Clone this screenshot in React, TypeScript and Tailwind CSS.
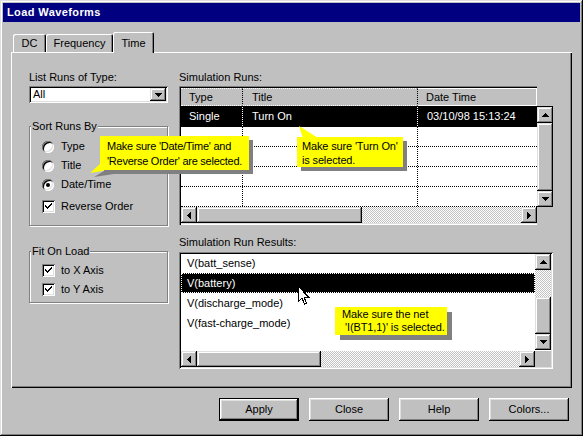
import React from "react";

const raised =
  "shadow-[inset_-1px_-1px_#000,inset_1px_1px_#fff,inset_-2px_-2px_#808080,inset_2px_2px_#dfdfdf]";
const raisedSb =
  "shadow-[inset_-1px_-1px_#000,inset_1px_1px_#dfdfdf,inset_-2px_-2px_#808080,inset_2px_2px_#fff]";
const sunken =
  "shadow-[inset_1px_1px_#808080,inset_-1px_-1px_#fff,inset_2px_2px_#000,inset_-2px_-2px_#dfdfdf]";
const checker =
  "bg-[image:repeating-conic-gradient(#c0c0c0_0%_25%,#ffffff_0%_50%)] bg-[length:2px_2px]";

type Dir = "up" | "down" | "left" | "right";

function Arrow({ dir }: { dir: Dir }) {
  const vertical = dir === "up" || dir === "down";
  const w = vertical ? 7 : 4;
  const h = vertical ? 4 : 7;
  const pts = {
    up: "3.5,0 7,4 0,4",
    down: "0,0 7,0 3.5,4",
    left: "4,0 4,7 0,3.5",
    right: "0,0 0,7 4,3.5",
  }[dir];
  return (
    <svg width={w} height={h} viewBox={`0 0 ${w} ${h}`} shapeRendering="crispEdges">
      <polygon points={pts} fill="#000" />
    </svg>
  );
}

function SBtn({ dir }: { dir: Dir }) {
  return (
    <div
      className={`w-[16px] h-[16px] shrink-0 flex items-center justify-center bg-[#c0c0c0] ${raisedSb}`}
    >
      <Arrow dir={dir} />
    </div>
  );
}

function Radio({ checked, label }: { checked?: boolean; label: string }) {
  return (
    <div className="h-[19px] flex items-center gap-[7px]">
      <div className="w-[12px] h-[12px] rounded-full bg-white shadow-[inset_1px_1px_#808080,inset_-1px_-1px_#fff,inset_2px_2px_#000,inset_-2px_-2px_#dfdfdf] flex items-center justify-center">
        {checked && <div className="w-[4px] h-[4px] rounded-full bg-black" />}
      </div>
      <span>{label}</span>
    </div>
  );
}

function Check({ label }: { label: string }) {
  return (
    <div className="h-[19px] flex items-center gap-[6px]">
      <div
        className={`w-[13px] h-[13px] bg-white flex items-center justify-center ${sunken}`}
      >
        <svg width="9" height="9" viewBox="0 0 9 9" shapeRendering="crispEdges">
          <path d="M1 3 L1 5 L3 7 L8 2 L8 0 L3 5 Z" fill="#000" />
        </svg>
      </div>
      <span>{label}</span>
    </div>
  );
}

function Group({
  title,
  children,
  className,
  inner,
}: {
  title: string;
  children: React.ReactNode;
  className: string;
  inner: string;
}) {
  return (
    <fieldset
      className={`border border-[#808080] shadow-[inset_1px_1px_#fff,1px_1px_#fff] ${className}`}
    >
      <legend className="ml-[1px] px-[1px] leading-[13px] bg-[#c0c0c0]">{title}</legend>
      <div className={`pl-[12px] ${inner}`}>{children}</div>
    </fieldset>
  );
}

function Tab({ label, w, selected }: { label: string; w: string; selected?: boolean }) {
  return (
    <div
      className={`${w} flex items-center justify-center rounded-t-[2px] bg-[#c0c0c0] shadow-[inset_1px_1px_#fff,inset_-1px_0_#000,inset_-2px_0_#808080] ${
        selected ? "h-[21px] -mb-[1px] pt-[1px] relative z-10" : "h-[18px]"
      }`}
    >
      {label}
    </div>
  );
}

function Btn({ children, def }: { children: React.ReactNode; def?: boolean }) {
  return (
    <div
      className={`w-[80px] h-[23px] flex items-center justify-center ${raised} ${
        def ? "border border-black" : ""
      }`}
    >
      {children}
    </div>
  );
}

function Callout({
  className,
  lines,
}: {
  className: string;
  lines: string[];
}) {
  return (
    <div
      className={`absolute bg-[#ffff00] whitespace-pre ${className}`}
    >
      {lines.map((l, i) => (
        <div key={i}>{l}</div>
      ))}
    </div>
  );
}

const runRows = [
  { type: "Single", title: "Turn On", date: "03/10/98 15:13:24", sel: true },
  { type: "", title: "", date: "" },
  { type: "", title: "", date: "" },
  { type: "", title: "", date: "" },
  { type: "", title: "", date: "" },
];

const results = ["V(batt_sense)", "V(battery)", "V(discharge_mode)", "V(fast-charge_mode)"];

export default function App() {
  return (
    <div className="relative w-[583px] h-[436px] bg-[#c0c0c0] p-[3px] flex flex-col font-['Liberation_Sans',Arial,sans-serif] text-[11px] leading-[13px] text-black shadow-[inset_-1px_-1px_#000,inset_1px_1px_#dfdfdf,inset_-2px_-2px_#808080,inset_2px_2px_#fff] overflow-hidden select-none">
      {/* title bar */}
      <div className="h-[19px] bg-[#000080] text-white font-bold tracking-[0.4px] pl-[4px] flex items-center">
        Load Waveforms
      </div>

      {/* tabs */}
      <div className="mt-[10px] h-[20px] ml-[10px] flex items-end">
        <Tab label="DC" w="w-[33px]" />
        <Tab label="Frequency" w="w-[67px]" />
        <Tab label="Time" w="w-[41px]" selected />
      </div>

      {/* panel */}
      <div className="ml-[8px] w-[561px] h-[336px] shadow-[inset_1px_1px_#fff,inset_-1px_-1px_#000,inset_-2px_-2px_#808080] flex pt-[19px] pl-[18px] gap-[11px]">
        {/* left column */}
        <div className="w-[139px] flex flex-col">
          <div>List Runs of Type:</div>
          <div className={`mt-[2px] h-[17px] w-[139px] flex bg-white p-[2px] ${sunken}`}>
            <div className="flex-1 flex items-center pl-[2px]">All</div>
            <div
              className={`w-[16px] h-full flex items-center justify-center bg-[#c0c0c0] ${raisedSb}`}
            >
              <Arrow dir="down" />
            </div>
          </div>

          <Group title="Sort Runs By" className="mt-[17px]" inner="pt-[4px] pb-[9px]">
            <Radio label="Type" />
            <Radio label="Title" />
            <Radio label="Date/Time" checked />
            <div className="mt-[3px]">
              <Check label="Reverse Order" />
            </div>
          </Group>

          <Group title="Fit On Load" className="mt-[19px]" inner="pt-[3px] pb-[3px]">
            <Check label="to X Axis" />
            <Check label="to Y Axis" />
          </Group>
        </div>

        {/* right column */}
        <div className="w-[374px] flex flex-col">
          <div>Simulation Runs:</div>
          {/* list view */}
          <div className="mt-[2px] w-[374px] flex flex-col">
            <div className="w-[358px] h-[20px] flex pl-[2px] pt-[2px] shadow-[inset_1px_1px_#808080,inset_2px_2px_#000]">
              <div className="w-[62px] h-[18px] flex items-center pl-[8px] border-y border-r border-dotted border-y-white border-r-black">
                Type
              </div>
              <div className="w-[175px] h-[18px] flex items-center pl-[9px] border-y border-r border-dotted border-y-white border-r-black">
                Title
              </div>
              <div className="flex-1 h-[18px] flex items-center pl-[8px] border-y border-dotted border-y-white border-r border-r-white border-solid">
                Date Time
              </div>
            </div>
            <div className="flex">
              <div className="w-[358px] flex flex-col pl-[2px] pt-[1px] pb-[2px] bg-white shadow-[inset_1px_0_#808080,inset_2px_1px_#000,inset_0_-1px_#fff,inset_0_-2px_#dfdfdf]">
                {runRows.map((r, i) => (
                  <div
                    key={i}
                    className={`h-[20px] flex border-b border-dotted border-black ${
                      r.sel ? "bg-black text-white" : ""
                    }`}
                  >
                    <div
                      className={`w-[62px] flex items-center pl-[8px] border-r border-dotted ${
                        r.sel ? "border-white" : "border-black"
                      }`}
                    >
                      {r.type}
                    </div>
                    <div
                      className={`w-[175px] flex items-center pl-[9px] border-r border-dotted ${
                        r.sel ? "border-white" : "border-black"
                      }`}
                    >
                      {r.title}
                    </div>
                    <div className="flex-1 flex items-center pl-[9px]">{r.date}</div>
                  </div>
                ))}
                <div className="h-[16px] flex">
                  <SBtn dir="left" />
                  <div className={`w-[165px] h-[16px] bg-[#c0c0c0] ${raisedSb}`} />
                  <div className={`flex-1 ${checker}`} />
                  <SBtn dir="right" />
                </div>
              </div>
              <div className="w-[16px] flex flex-col">
                <div className="border-t border-black flex flex-col">
                  <SBtn dir="up" />
                  <div className={`h-[68px] bg-[#c0c0c0] ${raisedSb}`} />
                  <SBtn dir="down" />
                </div>
              </div>
            </div>
          </div>

          <div className="mt-[11px]">Simulation Run Results:</div>
          {/* results list */}
          <div className={`mt-[3px] w-[374px] h-[117px] p-[2px] bg-white flex flex-col ${sunken}`}>
            <div className="flex flex-1">
              <div className="flex-1 flex flex-col">
                {results.map((r, i) => (
                  <div
                    key={r}
                    className={`${i === 0 ? "h-[19px]" : "h-[20px]"} ${
                      i === 1 ? "bg-black text-white" : ""
                    }`}
                  >
                    <div
                      className={`h-full flex items-center pl-[5px] border border-dotted ${
                        i === 1 ? "border-white" : "border-transparent"
                      }`}
                    >
                      {r}
                    </div>
                  </div>
                ))}
              </div>
              <div className="w-[16px] flex flex-col">
                <SBtn dir="up" />
                <div className={`h-[27px] ${checker}`} />
                <div className={`h-[37px] bg-[#c0c0c0] ${raisedSb}`} />
                <SBtn dir="down" />
              </div>
            </div>
            <div className="h-[16px] flex">
              <SBtn dir="left" />
              <div className={`w-[124px] h-[16px] bg-[#c0c0c0] ${raisedSb}`} />
              <div className={`flex-1 ${checker}`} />
              <SBtn dir="right" />
              <div className="w-[16px] bg-[#c0c0c0]" />
            </div>
          </div>
        </div>
      </div>

      {/* buttons */}
      <div className="mt-[10px] flex justify-end gap-[10px] pr-[11px]">
        <Btn def>Apply</Btn>
        <Btn>Close</Btn>
        <Btn>Help</Btn>
        <Btn>Colors...</Btn>
      </div>

      {/* callout tails + cursor */}
      <svg
        className="absolute left-0 top-0 pointer-events-none"
        width="583"
        height="436"
        viewBox="0 0 583 436"
      >
        <polygon points="94,177 104,171 114,174" fill="#808080" />
        <polygon points="90,173 100,164 108,170" fill="#ffff00" />
        <polygon points="302,129 308,141 322,141" fill="#808080" />
        <polygon points="299,126 303,138 318,138" fill="#ffff00" />
      </svg>

      <Callout
        className="left-[100px] top-[136px] w-[149px] h-[34px] pl-[7px] pt-[3px] leading-[15px] tracking-[-0.25px] shadow-[4px_4px_0_#808080]"
        lines={["Make sure 'Date/Time' and", "'Reverse Order' are selected."]}
      />
      <Callout
        className="left-[297px] top-[137px] w-[106px] h-[30px] pl-[5px] pt-[2px] leading-[14px] tracking-[-0.15px] shadow-[4px_4px_0_#808080]"
        lines={["Make sure 'Turn On'", "is selected."]}
      />
      <Callout
        className="left-[335px] top-[307px] w-[112px] h-[28px] pl-[7px] pt-[1px] leading-[13px] tracking-[-0.1px] shadow-[5px_5px_0_#808080]"
        lines={["Make sure the net", " 'I(BT1,1)' is selected."]}
      />

      <svg
        className="absolute left-[297px] top-[285px] pointer-events-none"
        width="13"
        height="21"
        viewBox="0 0 13 21"
        shapeRendering="crispEdges"
      >
        <path
          d="M1.5 1.5 L1.5 16.5 L5 13 L7.5 19 L9.5 18 L7 12 L11.5 12 Z"
          fill="#fff"
          stroke="#000"
          strokeWidth="1"
        />
      </svg>
    </div>
  );
}
